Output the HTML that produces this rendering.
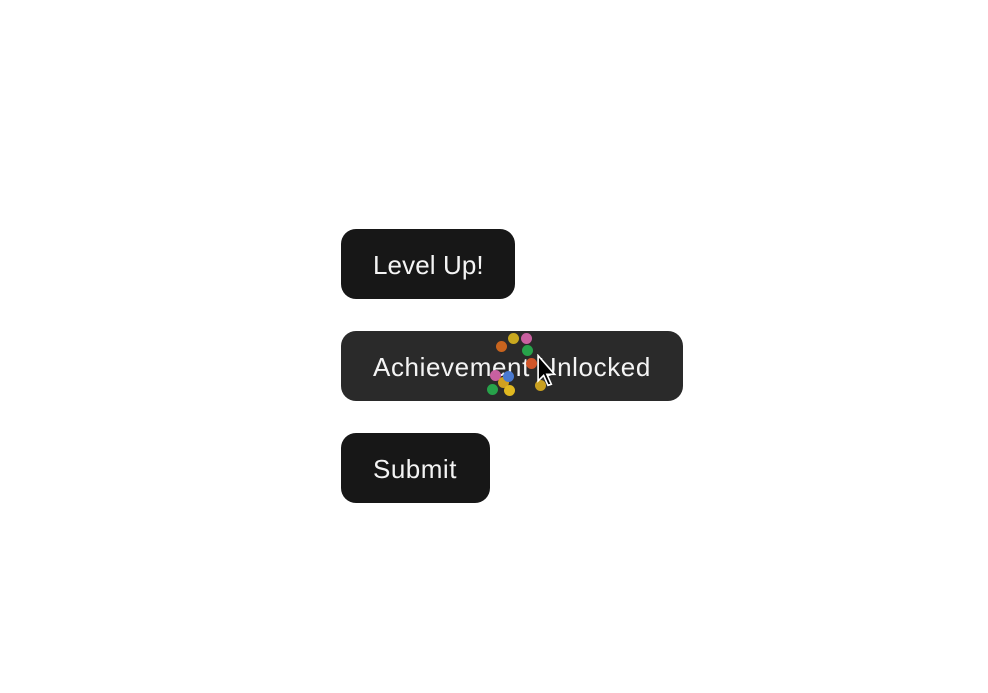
<!DOCTYPE html>
<html><head><style>
body{margin:0;width:988px;height:693px;background:#fff;position:relative;overflow:hidden;font-family:"Segoe UI","Liberation Sans",sans-serif}
.b{position:absolute;left:341px;height:70px;border-radius:15px;background:#171717;color:#f4f4f4;font-size:26px;line-height:72px;padding-left:32px;box-sizing:border-box;letter-spacing:0.3px}
.d{position:absolute;width:11px;height:11px;border-radius:50%}
</style></head><body>
<div class="b" style="top:229px;width:174px;letter-spacing:0.1px">Level Up!</div>
<div class="b" style="top:331px;width:342px;background:#2a2a2a;letter-spacing:0.6px">Achievement Unlocked</div>
<div class="b" style="top:433px;width:149px;letter-spacing:0.5px">Submit</div>
<div class="d" style="left:496px;top:341px;background:#c8641e"></div>
<div class="d" style="left:508px;top:333px;background:#c9a81f"></div>
<div class="d" style="left:521px;top:333px;background:#c960a0"></div>
<div class="d" style="left:522px;top:345px;background:#27a24a"></div>
<div class="d" style="left:526px;top:358px;background:#d0562a"></div>
<div class="d" style="left:490px;top:370px;background:#c960a0"></div>
<div class="d" style="left:498px;top:377px;background:#d0a020"></div>
<div class="d" style="left:504px;top:385px;background:#e0b820"></div>
<div class="d" style="left:487px;top:384px;background:#27a24a"></div>
<div class="d" style="left:535px;top:380px;background:#c9a020"></div>
<div class="d" style="left:503px;top:371px;background:#4a7ad0"></div>
<svg style="position:absolute;left:537px;top:354px" width="22" height="34" viewBox="0 0 20 30"><path d="M1 1 L1 24 L6 19 L10 28 L13 27 L9 18 L16 18 Z" fill="#000" stroke="#fff" stroke-width="1.5"/></svg>
</body></html>
